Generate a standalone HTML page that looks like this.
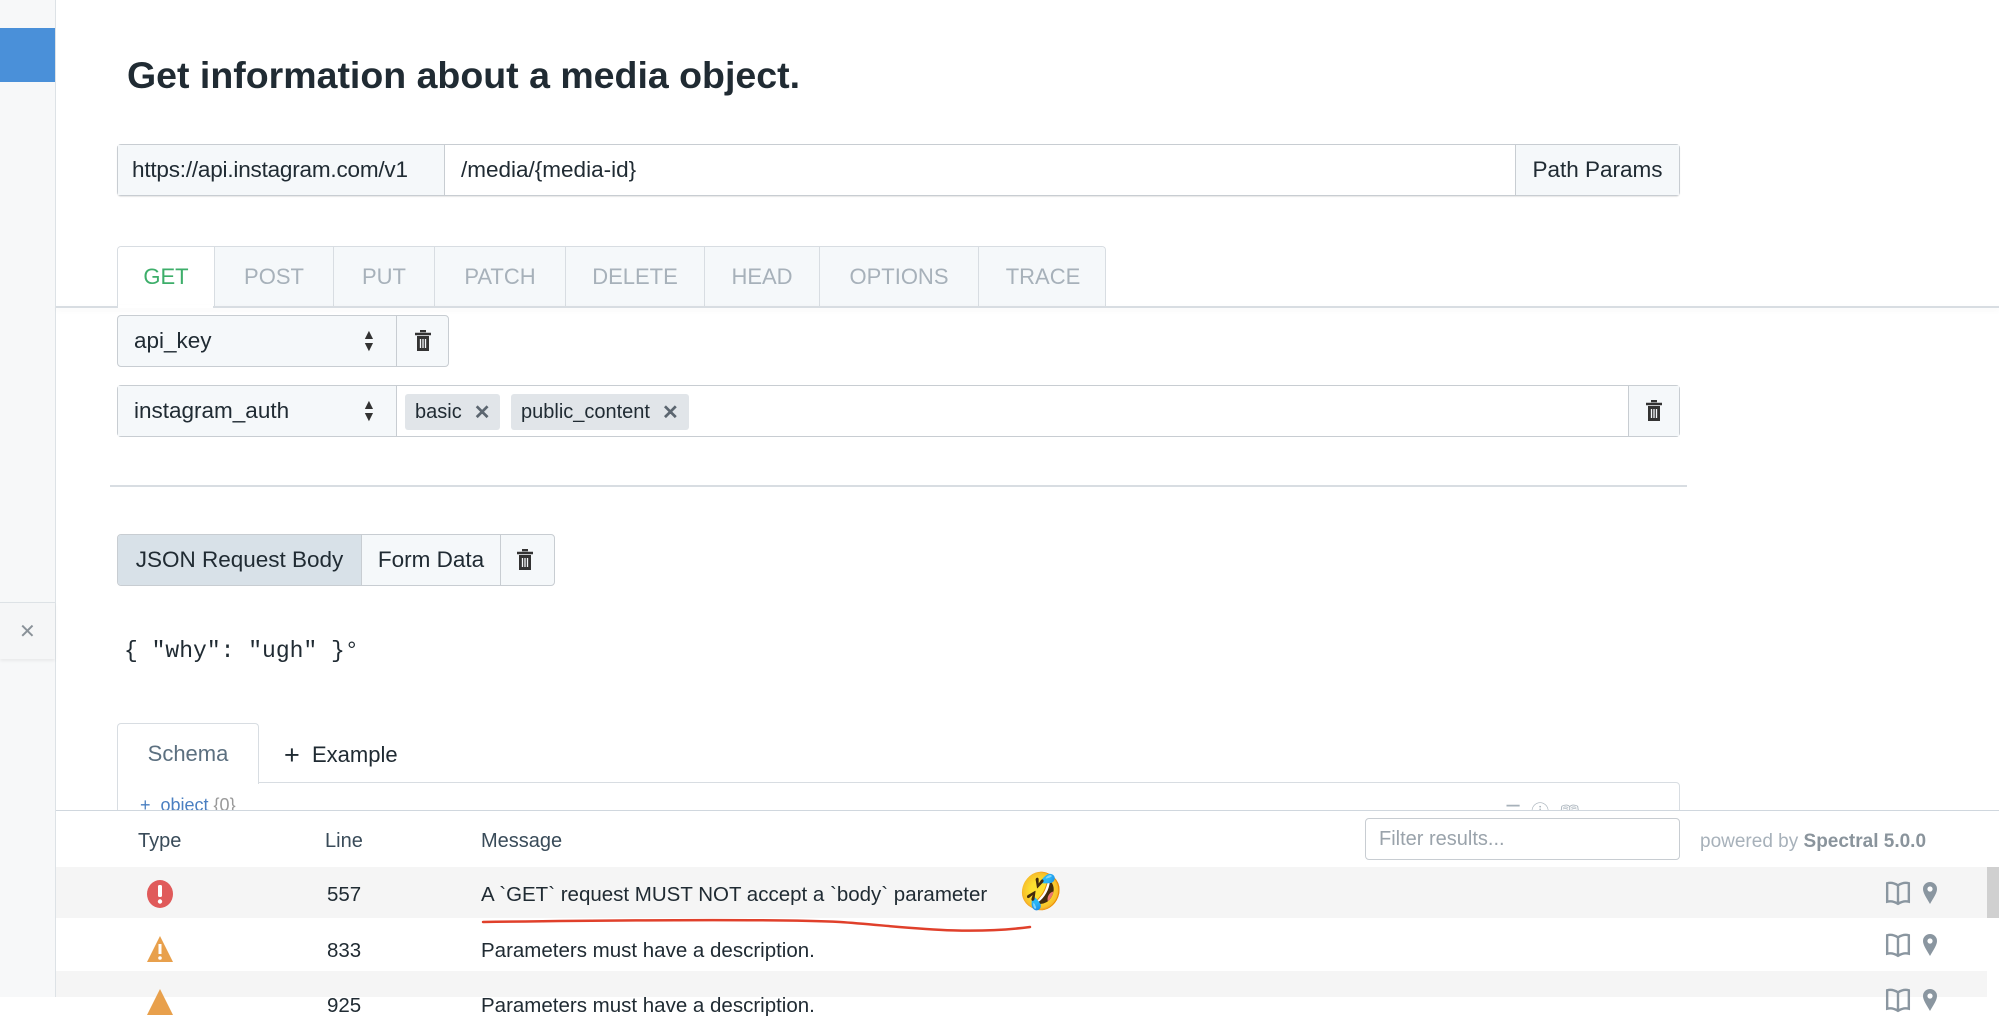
<!DOCTYPE html>
<html><head><meta charset="utf-8"><style>
*{box-sizing:border-box;margin:0;padding:0}
body{width:1999px;height:997px;overflow:hidden;background:#fff;font-family:"Liberation Sans",sans-serif;color:#202b33;position:relative}
.a{position:absolute}
.box{position:absolute;border:1.5px solid #c8cdd2;border-radius:4px}
.cell{position:absolute;top:0;bottom:0;display:flex;align-items:center;font-size:22.5px}
.tab{position:absolute;top:0;height:60px;display:flex;align-items:center;justify-content:center;font-size:22px;color:#a7b1ba;background:#f5f8fa;border-right:1.5px solid #d8dde2}
.tag{position:absolute;top:8px;height:36px;background:#e1e5e9;border-radius:3px;font-size:20px;display:flex;align-items:center;padding:0 10px;color:#202b33}
.tag b{color:#5c6670;margin-left:12px;font-size:20px}
.t{font-size:20.5px}
</style></head><body>
<div class="a" style="left:0;top:0;width:56px;height:997px;background:#f7f8f9;border-right:1.5px solid #dde2e6"></div>
<div class="a" style="left:0;top:28px;width:55px;height:54px;background:#4a90d9"></div>
<div class="a" style="left:0;top:602px;width:55px;height:57px;background:#f5f6f7;border-top:1.5px solid #dde2e6;box-shadow:0 2px 3px rgba(0,0,0,.06)"></div>
<div class="a" style="left:19px;top:619px;font-size:20px;color:#8a9299">✕</div>

<div class="a" style="left:127px;top:54px;font-size:37.5px;font-weight:bold;color:#202b33">Get information about a media object.</div>

<div class="box" style="left:117px;top:144px;width:1563px;height:52px;box-shadow:0 1px 1px rgba(0,0,0,.1)">
 <div class="cell" style="left:0;width:327px;background:#f5f8fa;border-right:1.5px solid #c8cdd2;padding-left:14px;letter-spacing:-0.2px">https://api.instagram.com/v1</div>
 <div class="cell" style="left:343px;">/media/{media-id}</div>
 <div class="cell" style="left:1397px;right:0;background:#f5f8fa;border-left:1.5px solid #c8cdd2;justify-content:center">Path Params</div>
</div>

<div class="a" style="left:117px;top:246px;width:989px;height:61px;border:1.5px solid #d8dde2;border-bottom:none;border-radius:4px 4px 0 0;overflow:hidden">
 <div class="tab" style="left:0;width:97px;background:#fff;color:#3dae6a">GET</div>
 <div class="tab" style="left:97px;width:119px">POST</div>
 <div class="tab" style="left:216px;width:101px">PUT</div>
 <div class="tab" style="left:317px;width:131px">PATCH</div>
 <div class="tab" style="left:448px;width:139px">DELETE</div>
 <div class="tab" style="left:587px;width:115px">HEAD</div>
 <div class="tab" style="left:702px;width:159px">OPTIONS</div>
 <div class="tab" style="left:861px;width:128px;border-right:none">TRACE</div>
</div>
<div class="a" style="left:56px;top:306px;width:1943px;height:2px;background:#d8dde2;box-shadow:0 2px 6px rgba(0,0,0,.06)"></div>
<div class="a" style="left:118px;top:305px;width:95px;height:3px;background:#fff"></div>

<div class="box" style="left:117px;top:315px;width:332px;height:52px;background:#f5f8fa">
 <div class="cell" style="left:16px;">api_key</div>
 <div class="a" style="left:244px;top:12px;font-size:14px;line-height:12px;color:#333">▲<br>▼</div>
 <div class="a" style="left:278px;top:0;bottom:0;border-left:1.5px solid #c8cdd2"></div>
 <svg class="a" style="left:296px;top:14px" width="18" height="22" viewBox="0 0 18 22"><path d="M6 1h6M1 4h16" stroke="#333" stroke-width="2.5"/><rect x="3" y="6" width="12" height="15" fill="#333"/><path d="M6.5 9v9M9 9v9M11.5 9v9" stroke="#f5f8fa" stroke-width="1.3"/></svg>
</div>

<div class="box" style="left:117px;top:385px;width:1563px;height:52px">
 <div class="a" style="left:0;top:0;bottom:0;width:279px;background:#f5f8fa;border-right:1.5px solid #c8cdd2"></div>
 <div class="cell" style="left:16px;">instagram_auth</div>
 <div class="a" style="left:244px;top:12px;font-size:14px;line-height:12px;color:#333">▲<br>▼</div>
 <div class="tag" style="left:287px">basic<b>✕</b></div>
 <div class="tag" style="left:393px">public_content<b>✕</b></div>
 <div class="a" style="left:1510px;top:0;bottom:0;right:0;background:#f5f8fa;border-left:1.5px solid #c8cdd2"></div>
 <svg class="a" style="left:1527px;top:14px" width="18" height="22" viewBox="0 0 18 22"><path d="M6 1h6M1 4h16" stroke="#333" stroke-width="2.5"/><rect x="3" y="6" width="12" height="15" fill="#333"/><path d="M6.5 9v9M9 9v9M11.5 9v9" stroke="#f5f8fa" stroke-width="1.3"/></svg>
</div>

<div class="a" style="left:110px;top:485px;width:1577px;height:2px;background:#d8dde2"></div>

<div class="box" style="left:117px;top:534px;width:438px;height:52px;background:#f5f8fa;overflow:hidden">
 <div class="cell" style="left:0;width:244px;background:#d8e1e8;border-right:1.5px solid #c8cdd2;justify-content:center">JSON Request Body</div>
 <div class="cell" style="left:244px;width:139px;justify-content:center;border-right:1.5px solid #c8cdd2">Form Data</div>
 <svg class="a" style="left:398px;top:14px" width="18" height="22" viewBox="0 0 18 22"><path d="M6 1h6M1 4h16" stroke="#333" stroke-width="2.5"/><rect x="3" y="6" width="12" height="15" fill="#333"/><path d="M6.5 9v9M9 9v9M11.5 9v9" stroke="#f5f8fa" stroke-width="1.3"/></svg>
</div>

<div class="a" style="left:124px;top:638px;font-family:'Liberation Mono',monospace;font-size:23px;color:#202b33">{ "why": "ugh" }°</div>

<div class="a" style="left:117px;top:723px;width:142px;height:61px;border:1.5px solid #d8dde2;border-bottom:none;border-radius:4px 4px 0 0;background:#fff;display:flex;align-items:center;justify-content:center;font-size:22px;color:#5c7080;z-index:2">Schema</div>
<div class="a" style="left:284px;top:740px;font-size:22px;color:#202b33"><span style="font-size:27px;vertical-align:-2px">+</span>&nbsp; Example</div>
<div class="a" style="left:117px;top:782px;width:1563px;height:60px;border:1.5px solid #d8dde2;border-radius:0 4px 0 0"></div>
<div class="a" style="left:140px;top:795px;font-size:18px;color:#4a7fc1">+ &nbsp;object <span style="color:#999">{0}</span></div>
<div class="a" style="left:1505px;top:798px;font-size:18px;color:#a7b1ba">☰ &nbsp;ⓘ &nbsp;🕮</div>

<div class="a" style="left:56px;top:810px;width:1943px;height:187px;background:#fff;border-top:1.5px solid #d0d7de"></div>
<div class="a" style="left:138px;top:830px;font-size:20px;color:#394b59">Type</div>
<div class="a" style="left:325px;top:830px;font-size:20px;color:#394b59">Line</div>
<div class="a" style="left:481px;top:830px;font-size:20px;color:#394b59">Message</div>
<div class="a" style="left:1365px;top:818px;width:315px;height:42px;border:1.5px solid #c8cdd2;border-radius:4px;font-size:20px;color:#9aa3ab;padding:9px 13px">Filter results...</div>
<div class="a" style="left:1700px;top:831px;font-size:19px;color:#a7b1ba">powered by <b style="color:#8a949c">Spectral 5.0.0</b></div>

<div class="a" style="left:56px;top:867px;width:1931px;height:51px;background:#f5f5f5"></div>
<div class="a" style="left:56px;top:971px;width:1931px;height:26px;background:#f5f5f5"></div>
<div class="a" style="left:1987px;top:867px;width:12px;height:51px;background:#d0d0d0"></div>

<svg class="a" style="left:146px;top:879px" width="28" height="30" viewBox="0 0 28 30"><ellipse cx="14" cy="15" rx="13" ry="14" fill="#e05a5a"/><rect x="12" y="6" width="4" height="12" rx="1.5" fill="#fff"/><circle cx="14" cy="22.5" r="2.2" fill="#fff"/></svg>
<div class="a t" style="left:327px;top:883px">557</div>
<div class="a t" style="left:481px;top:883px">A `GET` request MUST NOT accept a `body` parameter</div>
<div class="a" style="left:1019px;top:872px;font-size:36px;line-height:40px;transform:rotate(-15deg)">🤣</div>
<svg class="a" style="left:480px;top:918px" width="560" height="20" viewBox="0 0 560 20"><path d="M3 4 C150 2 300 1 360 4 C420 8 480 18 550 9" stroke="#e0402b" stroke-width="2.5" fill="none" stroke-linecap="round"/></svg>

<svg class="a" style="left:146px;top:935px" width="28" height="28" viewBox="0 0 28 28"><path d="M14 1 L27 27 H1 Z" fill="#e8a04c"/><rect x="12.5" y="9" width="3" height="10" fill="#fff"/><circle cx="14" cy="23" r="1.8" fill="#fff"/></svg>
<div class="a t" style="left:327px;top:939px">833</div>
<div class="a t" style="left:481px;top:939px">Parameters must have a description.</div>
<svg class="a" style="left:146px;top:988px" width="28" height="28" viewBox="0 0 28 28"><path d="M14 1 L27 27 H1 Z" fill="#e8a04c"/></svg>
<div class="a t" style="left:327px;top:994px">925</div>
<div class="a t" style="left:481px;top:994px">Parameters must have a description.</div>

<svg width="0" height="0" style="position:absolute"><defs>
<symbol id="bk" viewBox="0 0 24 24"><path d="M2 3 C6 2 9 3 12 5 C15 3 18 2 22 3 V20 C18 19 15 20 12 22 C9 20 6 19 2 20 Z M12 5 V22" fill="none" stroke="#8a96a0" stroke-width="2.2"/></symbol>
<symbol id="pn" viewBox="0 0 16 24"><path d="M8 23 C4 16 1 12 1 8 A7 7 0 0 1 15 8 C15 12 12 16 8 23 Z" fill="#8a96a0"/><circle cx="8" cy="8" r="2.6" fill="#fff"/></symbol></defs></svg>
<svg class="a" style="left:1885px;top:880px" width="26" height="26"><use href="#bk"/></svg>
<svg class="a" style="left:1922px;top:880px" width="16" height="26"><use href="#pn"/></svg>
<svg class="a" style="left:1885px;top:932px" width="26" height="26"><use href="#bk"/></svg>
<svg class="a" style="left:1922px;top:932px" width="16" height="26"><use href="#pn"/></svg>
<svg class="a" style="left:1885px;top:987px" width="26" height="26"><use href="#bk"/></svg>
<svg class="a" style="left:1922px;top:987px" width="16" height="26"><use href="#pn"/></svg>
</body></html>
